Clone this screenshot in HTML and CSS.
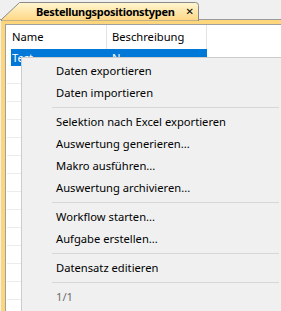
FILE: index.html
```html
<!DOCTYPE html>
<html lang="de">
<head>
    <meta charset="UTF-8">
    <title>Bestellungspositionstypen</title>
    <link rel="stylesheet" href="styles.css">
</head>
<body>
    <div class="tabstrip">
        <div class="tab">
            <svg class="tab-shape" width="199" height="21" viewBox="0 0 199 21">
                <defs>
                    <linearGradient id="tabFill" x1="0" y1="0" x2="0" y2="1">
                        <stop offset="0" stop-color="#fff6d2"/>
                        <stop offset="1" stop-color="#fed682"/>
                    </linearGradient>
                </defs>
                <path d="M0.5,21 L0.5,19.5 L18.5,2.5 L194.5,2.5 Q197.5,2.5 197.5,5.5 L197.5,21 Z" fill="url(#tabFill)" stroke="#8a8a8a" stroke-width="1"/>
            </svg>
            <span class="tab-title">Bestellungspositionstypen</span>
            <span class="tab-close">&#x2715;</span>
        </div>
    </div>

    <div class="frame">
        <div class="panel">
            <div class="grid">
                <div class="grid-head">
                    <div class="cell cell-name">Name</div>
                    <div class="cell cell-desc">Beschreibung</div>
                </div>
                <div class="grid-row selected">
                    <div class="cell cell-name">Test</div>
                    <div class="cell cell-desc">N</div>
                </div>
                <div class="grid-row"></div>
                <div class="grid-row"></div>
                <div class="grid-row"></div>
                <div class="grid-row"></div>
                <div class="grid-row"></div>
                <div class="grid-row"></div>
                <div class="grid-row"></div>
                <div class="grid-row"></div>
                <div class="grid-row"></div>
                <div class="grid-row"></div>
                <div class="grid-row"></div>
                <div class="grid-row"></div>
                <div class="grid-row"></div>
                <div class="grid-row"></div>
            </div>
        </div>
    </div>

    <div class="context-menu">
        <div class="menu-item">Daten exportieren</div>
        <div class="menu-item">Daten importieren</div>
        <div class="menu-sep"></div>
        <div class="menu-item">Selektion nach Excel exportieren</div>
        <div class="menu-item">Auswertung generieren...</div>
        <div class="menu-item">Makro ausführen...</div>
        <div class="menu-item">Auswertung archivieren...</div>
        <div class="menu-sep"></div>
        <div class="menu-item">Workflow starten...</div>
        <div class="menu-item">Aufgabe erstellen...</div>
        <div class="menu-sep"></div>
        <div class="menu-item">Datensatz editieren</div>
        <div class="menu-sep"></div>
        <div class="menu-item disabled">1/1</div>
    </div>
</body>
</html>
```

FILE: styles.css
```css
body {
    margin: 0;
    width: 281px;
    height: 311px;
    overflow: hidden;
    position: relative;
    background-color: #f0f0f0;
    font-family: "Noto Sans", "DejaVu Sans", sans-serif;
    font-size: 11.2px;
    color: #000;
}

/* tab strip */
.tabstrip {
    height: 19px;
    border-bottom: 1px solid #9a9a9a;
}
.tab {
    position: relative;
    margin-left: 1px;
    width: 198px;
    height: 20px;
    display: flex;
    align-items: center;
    padding: 2px 0 0 35px;
    box-sizing: border-box;
}
.tab-shape {
    position: absolute;
    left: 0;
    top: 0;
}
.tab-title {
    position: relative;
    font-size: 11px;
    font-weight: bold;
    letter-spacing: -0.3px;
}
.tab-close {
    position: relative;
    margin-left: 11px;
    font-size: 10px;
    font-weight: bold;
}

/* yellow frame round the view */
.frame {
    margin-left: 1px;
    padding: 4px 0 0 4px;
    background-color: #fdd67c;
    height: 291px;
    box-sizing: border-box;
}
.panel {
    height: 100%;
    background-color: white;
    border-left: 1px solid #a0a0a0;
    border-top: 1px solid #a0a0a0;
    padding-left: 5px;
}

/* grid */
.grid-head {
    display: flex;
    height: 24px;
    width: 196px;
}
.grid-head .cell {
    border-right: 1px solid #e3e3e3;
    line-height: 24px;
}
.cell {
    box-sizing: border-box;
    padding-left: 1px;
}
.cell-name {
    width: 96px;
}
.cell-desc {
    width: 100px;
    padding-left: 5px;
}
.grid-row {
    display: flex;
    height: 17px;
    border-bottom: 1px solid #ececec;
    margin-left: -4px;
    padding-left: 4px;
}
.grid-row .cell {
    line-height: 17px;
}
.grid-row.selected {
    width: 196px;
    margin-left: 0;
    padding-left: 0;
    background-color: #0078d7;
    color: white;
    border-bottom: none;
}

/* context menu */
.context-menu {
    position: absolute;
    left: 21px;
    top: 57px;
    width: 262px;
    height: 262px;
    padding: 2px 0;
    background-color: #f0f0f0;
    border: 1px solid #cccccc;
}
.menu-item {
    height: 22px;
    line-height: 22px;
    padding-left: 34px;
    white-space: nowrap;
}
.menu-item.disabled {
    color: #6d6d6d;
}
.menu-sep {
    height: 7px;
    position: relative;
}
.menu-sep::after {
    content: "";
    position: absolute;
    left: 30px;
    right: 5px;
    top: 3px;
    border-top: 1px solid #d7d7d7;
}
```
